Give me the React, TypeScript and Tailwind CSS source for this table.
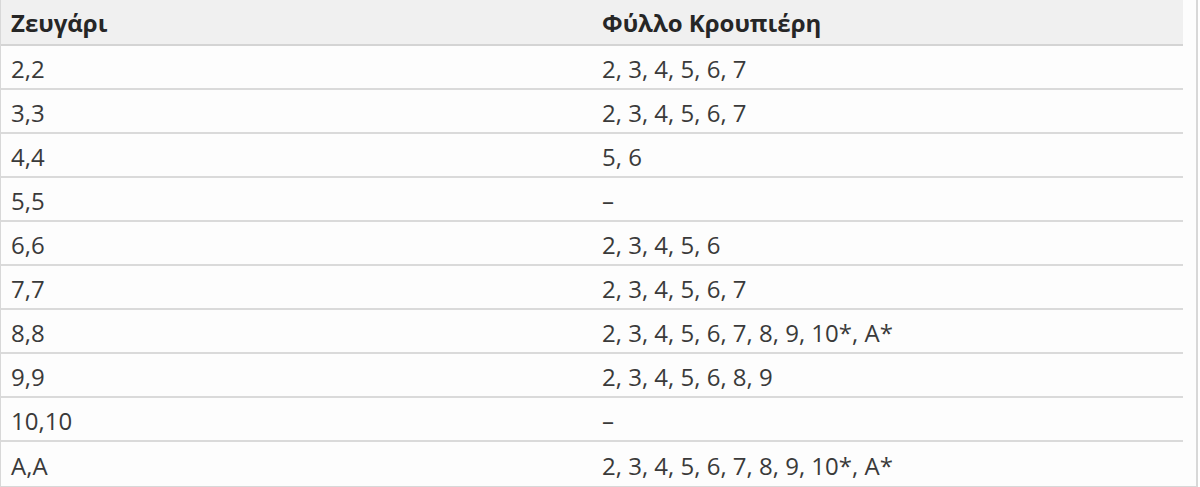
const rows: [string, string][] = [
  ["2,2", "2, 3, 4, 5, 6, 7"],
  ["3,3", "2, 3, 4, 5, 6, 7"],
  ["4,4", "5, 6"],
  ["5,5", "–"],
  ["6,6", "2, 3, 4, 5, 6"],
  ["7,7", "2, 3, 4, 5, 6, 7"],
  ["8,8", "2, 3, 4, 5, 6, 7, 8, 9, 10*, A*"],
  ["9,9", "2, 3, 4, 5, 6, 8, 9"],
  ["10,10", "–"],
  ["A,A", "2, 3, 4, 5, 6, 7, 8, 9, 10*, A*"],
];

export default function App() {
  return (
    <div className="w-[1200px] h-[487px] bg-white font-['Open_Sans',sans-serif] text-[#3a3a3a]">
      <div className="w-[1198px] border-l border-r-2 border-b-2 border-[#d8d8d8] bg-[#fdfdfd]">
        <div className="flex h-[46px] bg-[#f0f0f0] border-b-2 border-[#d4d4d4] mr-[13px] items-center pt-[2px] text-[24px] leading-none font-bold text-[#262626]">
          <div className="w-[590px] pl-[10px]">Ζευγάρι</div>
          <div className="flex-1 pl-[11px]">Φύλλο Κρουπιέρη</div>
        </div>
        {rows.map(([pair, dealer], i) => (
          <div
            key={i}
            className={
              "flex h-[44px] items-center pt-[3px] text-[24px] leading-none mr-[13px] " +
              (i < rows.length - 1 ? "border-b-2 border-[#dadada]" : "")
            }
          >
            <div className="w-[590px] pl-[10px]">{pair}</div>
            <div className="flex-1 pl-[11px]">{dealer}</div>
          </div>
        ))}
      </div>
    </div>
  );
}
